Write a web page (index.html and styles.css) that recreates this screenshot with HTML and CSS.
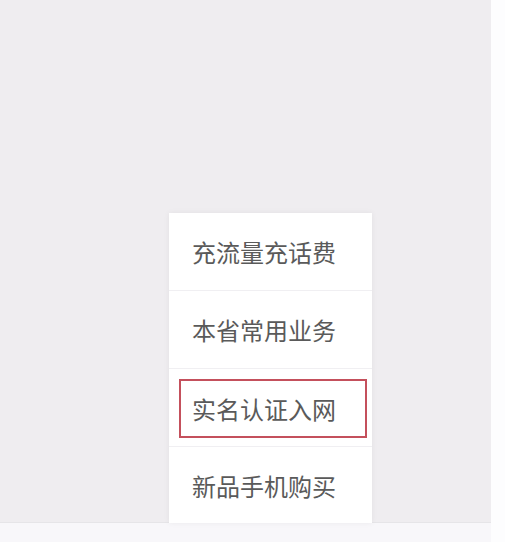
FILE: index.html
```html
<!DOCTYPE html>
<html lang="zh">
  <head>
    <meta charset="UTF-8" />
    <title>菜单</title>
    <link rel="stylesheet" href="styles.css">
  </head>
  <body>
    <div class="screen">
      <div class="main">
        <div class="backdrop">
          <ul class="menu">
            <li class="menu-item">充流量充话费</li>
            <li class="menu-item">本省常用业务</li>
            <li class="menu-item"><span class="marked">实名认证入网</span></li>
            <li class="menu-item">新品手机购买</li>
          </ul>
        </div>
        <div class="tabbar"></div>
      </div>
      <div class="edge"></div>
    </div>
  </body>
</html>
```

FILE: styles.css
```css
* {
  margin: 0;
  padding: 0;
  box-sizing: border-box;
}

body {
  background: #fdfdfe;
  font-family: "Noto Sans CJK SC", "Noto Sans", sans-serif;
  width: 505px;
  height: 542px;
  overflow: hidden;
}

.screen {
  display: flex;
  height: 542px;
}

.main {
  width: 491px;
  display: flex;
  flex-direction: column;
}

.backdrop {
  position: relative;
  height: 523px;
  background: #efedf0;
  border-bottom: 1px solid #e6e5e8;
}

.tabbar {
  flex: 1;
  background: #f8f7fa;
}

.edge {
  flex: 1;
  background: #fdfdfe;
}

/* menu ouvert au-dessus du fond */
.menu {
  position: absolute;
  left: 169px;
  top: 213px;
  width: 203px;
  list-style: none;
  background: #fff;
  box-shadow: 0 0 6px rgba(0, 0, 0, 0.06);
}

.menu-item {
  height: 78px;
  display: flex;
  align-items: center;
  padding-left: 10px;
  font-size: 24px;
  color: #5a5a5a;
  border-bottom: 1px solid #f0eff2;
}

.menu-item:last-child {
  border-bottom: none;
  height: 76px;
}

.menu-item:not(:has(.marked)) {
  padding-left: 23px;
}

.marked {
  display: flex;
  align-items: center;
  width: 188px;
  height: 59px;
  margin-top: 2px;
  padding-left: 11px;
  border: 2px solid #c4505c;
}
```
